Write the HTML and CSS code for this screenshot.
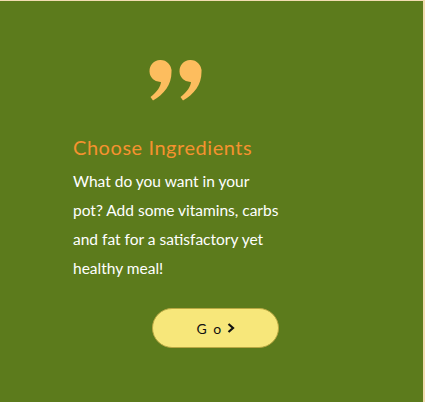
FILE: index.html
```html
<!DOCTYPE html>
<html>
<head>
<meta charset="utf-8">
<link rel="stylesheet" href="styles.css">
</head>
<body>
<div class="card">
  <svg class="quote" width="56" height="44" viewBox="0 0 56 44">
    <path d="M11 2 A11 11 0 0 1 22.5 14 C22.5 27 15 36 4 42.5 L1.5 39 C8.5 33.5 11.5 28.5 12 24 A11 11 0 0 1 11 2 Z" fill="#fdbd5e"/>
    <path d="M41 2 A11 11 0 0 1 52.5 14 C52.5 27 45 36 34 42.5 L31.5 39 C38.5 33.5 41.5 28.5 42 24 A11 11 0 0 1 41 2 Z" fill="#fdbd5e"/>
  </svg>
  <div class="content">
    <h2 class="title">Choose Ingredients</h2>
    <p class="text">What do you want in your<br>pot? Add some vitamins, carbs<br>and fat for a satisfactory yet<br>healthy meal!</p>
  </div>
  <button class="go"><span class="go-label">G o</span><svg class="chev" width="8" height="10" viewBox="0 0 8 10"><path d="M1.5 1 L6 5 L1.5 9" fill="none" stroke="#111" stroke-width="2.2"/></svg></button>
</div>
</body>
</html>
```
FILE: styles.css
```css
html { background: #f2dcb2; }
body { margin: 0; }
.card {
  margin-top: 1px;
  width: 423px;
  height: 401px;
  background: #5c7b1c;
  display: flex;
  flex-direction: column;
  box-sizing: border-box;
  padding-top: 57px;
}
.quote { margin-left: 149px; display: block; }
.content { padding-left: 73px; margin-top: 33px; }
.title {
  margin: 0;
  font-family: "Lato", sans-serif;
  font-weight: 400;
  font-size: 20px;
  line-height: 24px;
  color: #f5922f;
  letter-spacing: 0.55px;
}
.text {
  margin: 8px 0 0 0;
  font-family: "Lato", sans-serif;
  font-weight: 400;
  font-size: 15.5px;
  line-height: 29px;
  color: #ffffff;
}
.go {
  margin-left: 152px;
  margin-top: 25px;
  width: 127px;
  height: 40px;
  border-radius: 20px;
  background: #f7e77a;
  border: 1px solid #b9a842;
  font-family: "Lato", sans-serif;
  font-size: 14px;
  color: #111;
  display: flex;
  align-items: center;
  justify-content: center;
  gap: 4px;
  padding: 0;
}
.go-label { letter-spacing: 1.5px; }
.chev { display: block; }
```
